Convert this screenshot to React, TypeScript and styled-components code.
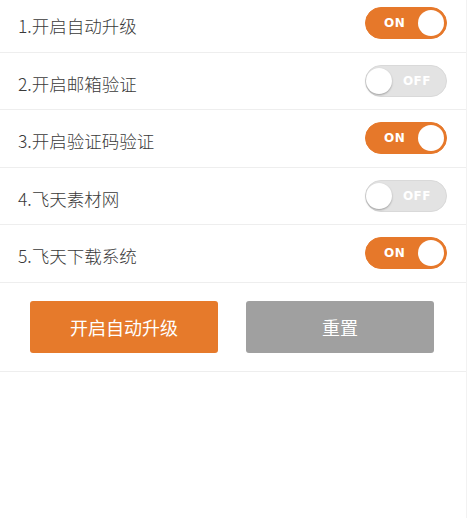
import React, { useState } from 'react'
import styled, { createGlobalStyle } from 'styled-components'

const GlobalStyle = createGlobalStyle`
  html, body {
    margin: 0;
    padding: 0;
    background: #fff;
  }
  body {
    font-family: "Noto Sans CJK SC", "Liberation Sans", sans-serif;
    overflow: hidden;
  }
`

const Page = styled.div`
  width: 466px;
  height: 518px;
  border-right: 1px solid #f2f2f2;
  overflow: hidden;
`

// the list is scrolled a few pixels down in the reference
const List = styled.ul`
  list-style: none;
  margin: -5px 0 0;
  padding: 0;
`

const Row = styled.li`
  height: 56.5px;
  display: flex;
  align-items: center;
  justify-content: space-between;
  padding: 0 18px;
  border-bottom: 1px solid #eeeeee;
`

const Label = styled.span`
  font-size: 17.5px;
  font-weight: 300;
  color: #3a3a3a;
  padding-top: 5px;
`

const Track = styled.button<{ $on: boolean }>`
  position: relative;
  width: 82px;
  height: 32px;
  margin-right: 1px;
  padding: 0;
  border-radius: 16px;
  border: 1px solid ${(p) => (p.$on ? '#e6782a' : '#d9d9d9')};
  background: ${(p) => (p.$on ? '#e6782a' : '#e3e3e3')};
  cursor: pointer;
  display: flex;
  align-items: center;
  justify-content: ${(p) => (p.$on ? 'flex-start' : 'flex-end')};
  font-family: "DejaVu Sans", "Liberation Sans", sans-serif;
`

const State = styled.span<{ $on: boolean }>`
  color: #fff;
  font-size: 12px;
  font-weight: bold;
  letter-spacing: 0.5px;
  margin: ${(p) => (p.$on ? '0 0 0 18px' : '0 15px 0 0')};
`

const Knob = styled.span<{ $on: boolean }>`
  position: absolute;
  top: 2px;
  left: ${(p) => (p.$on ? '52px' : '0px')};
  width: 26px;
  height: 26px;
  border-radius: 50%;
  background: #fff;
  box-shadow: ${(p) => (p.$on ? 'none' : '0 1px 2px rgba(0,0,0,0.3)')};
`

const Actions = styled.div`
  display: flex;
  gap: 28px;
  padding: 18px 0 18px 30px;
  border-bottom: 1px solid #eeeeee;
`

const Action = styled.button<{ $tone: 'primary' | 'plain' }>`
  width: 188px;
  height: 52px;
  border: none;
  border-radius: 3px;
  background: ${(p) => (p.$tone === 'primary' ? '#e67a2b' : '#a0a0a0')};
  color: #fff;
  font-family: "Noto Sans CJK SC", sans-serif;
  font-size: 18px;
  cursor: pointer;
`

const Toggle = ({ on, onClick }: { on: boolean; onClick: () => void }) => (
  <Track $on={on} onClick={onClick}>
    <State $on={on}>{on ? 'ON' : 'OFF'}</State>
    <Knob $on={on} />
  </Track>
)

const initial = [
  { label: '1.开启自动升级', on: true },
  { label: '2.开启邮箱验证', on: false },
  { label: '3.开启验证码验证', on: true },
  { label: '4.飞天素材网', on: false },
  { label: '5.飞天下载系统', on: true },
]

const App = () => {
  const [items, setItems] = useState(initial)

  const flip = (i: number) =>
    setItems((prev) => prev.map((it, j) => (j === i ? { ...it, on: !it.on } : it)))

  return (
    <Page>
      <GlobalStyle />
      <List>
        {items.map((it, i) => (
          <Row key={it.label}>
            <Label>{it.label}</Label>
            <Toggle on={it.on} onClick={() => flip(i)} />
          </Row>
        ))}
      </List>
      <Actions>
        <Action $tone="primary">开启自动升级</Action>
        <Action $tone="plain" onClick={() => setItems(initial)}>
          重置
        </Action>
      </Actions>
    </Page>
  )
}

export default App
